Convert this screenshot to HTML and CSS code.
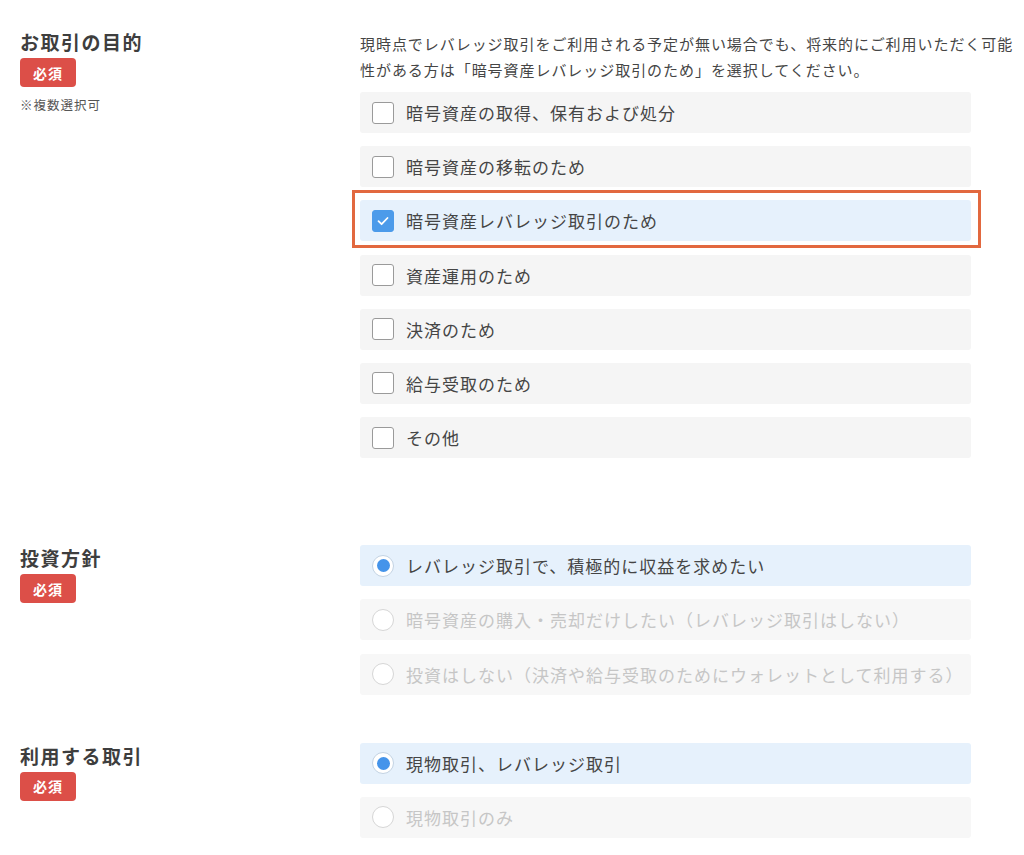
FILE: index.html
```html
<!DOCTYPE html>
<html lang="ja">
<head>
<meta charset="utf-8">
<title>お取引の目的</title>
<link rel="stylesheet" href="styles.css">
</head>
<body>
<div class="page">
  <section class="field field--purpose">
    <div class="field-label">
      <h2 class="field-title">お取引の目的</h2>
      <span class="badge">必須</span>
      <p class="note">※複数選択可</p>
    </div>
    <div class="field-body">
      <p class="desc">現時点でレバレッジ取引をご利用される予定が無い場合でも、将来的にご利用いただく可能性がある方は「暗号資産レバレッジ取引のため」を選択してください。</p>
      <ul class="options">
        <li class="option"><span class="check"></span><span class="option-text">暗号資産の取得、保有および処分</span></li>
        <li class="option"><span class="check"></span><span class="option-text">暗号資産の移転のため</span></li>
        <li class="option option--selected option--marked"><span class="check check--on"><svg viewBox="0 0 20 20" width="20" height="20"><path d="M5.5 10.2 L8.6 13.2 L14.5 7" fill="none" stroke="#fff" stroke-width="1.8" stroke-linecap="round" stroke-linejoin="round"/></svg></span><span class="option-text">暗号資産レバレッジ取引のため</span></li>
        <li class="option"><span class="check"></span><span class="option-text">資産運用のため</span></li>
        <li class="option"><span class="check"></span><span class="option-text">決済のため</span></li>
        <li class="option"><span class="check"></span><span class="option-text">給与受取のため</span></li>
        <li class="option"><span class="check"></span><span class="option-text">その他</span></li>
      </ul>
    </div>
  </section>

  <section class="field field--policy">
    <div class="field-label">
      <h2 class="field-title">投資方針</h2>
      <span class="badge">必須</span>
    </div>
    <div class="field-body">
      <ul class="options">
        <li class="option option--selected"><span class="radio radio--on"></span><span class="option-text">レバレッジ取引で、積極的に収益を求めたい</span></li>
        <li class="option option--disabled"><span class="radio"></span><span class="option-text">暗号資産の購入・売却だけしたい（レバレッジ取引はしない）</span></li>
        <li class="option option--disabled"><span class="radio"></span><span class="option-text">投資はしない（決済や給与受取のためにウォレットとして利用する）</span></li>
      </ul>
    </div>
  </section>

  <section class="field field--trade">
    <div class="field-label">
      <h2 class="field-title">利用する取引</h2>
      <span class="badge">必須</span>
    </div>
    <div class="field-body">
      <ul class="options">
        <li class="option option--selected"><span class="radio radio--on"></span><span class="option-text">現物取引、レバレッジ取引</span></li>
        <li class="option option--disabled"><span class="radio"></span><span class="option-text">現物取引のみ</span></li>
      </ul>
    </div>
  </section>
</div>
</body>
</html>
```

FILE: styles.css
```css
* { box-sizing: border-box; }

html, body {
  margin: 0;
  padding: 0;
  background: #ffffff;
}

body {
  font-family: "Noto Sans CJK JP", "Noto Sans", sans-serif;
  color: #444444;
  width: 1024px;
  height: 855px;
  overflow: hidden;
}

.page {
  padding: 29px 0 0 20px;
}

.field {
  display: grid;
  grid-template-columns: 340px 1fr;
}

.field--policy { margin-top: 87px; }
.field--trade { margin-top: 48px; }

.field-label {
  display: flex;
  flex-direction: column;
  align-items: flex-start;
}

.field-title {
  margin: 0;
  font-size: 19px;
  line-height: 26px;
  font-weight: 700;
  color: #3e3e3e;
  letter-spacing: 1.5px;
}

.badge {
  margin-top: 3px;
  width: 56px;
  height: 29px;
  border-radius: 4px;
  background: #dc4f48;
  color: #ffffff;
  font-size: 14px;
  font-weight: 700;
  display: flex;
  align-items: center;
  justify-content: center;
  letter-spacing: 1px;
}

.note {
  margin: 10px 0 0;
  font-size: 12.5px;
  line-height: 16px;
  color: #555555;
  letter-spacing: 1px;
}

.field-body {
  display: flex;
  flex-direction: column;
}

.desc {
  margin: 2px 0 0;
  width: 656px;
  font-size: 15px;
  line-height: 26px;
  letter-spacing: 0.95px;
  color: #454545;
}

.field--purpose .options { margin-top: 9px; }

.options {
  list-style: none;
  margin: 0;
  padding: 0;
  width: 611px;
  display: flex;
  flex-direction: column;
  gap: 13.2px;
}

.option {
  position: relative;
  height: 41px;
  border-radius: 3px;
  background: #f5f5f5;
  display: flex;
  align-items: center;
  padding-left: 12px;
  gap: 12px;
}

.option--selected { background: #e6f1fc; }

.option--disabled { background: #f7f7f7; }

.option--marked::after {
  content: "";
  position: absolute;
  top: -10px;
  bottom: -7px;
  left: -8px;
  right: -10px;
  border: 3px solid #e2683f;
  pointer-events: none;
}

.option-text {
  font-size: 17px;
  letter-spacing: 1px;
  color: #454545;
  line-height: 1;
}

.option--disabled .option-text { color: #c6c6c6; }

.check {
  width: 22px;
  height: 22px;
  border: 1.5px solid #9a9a9a;
  border-radius: 3px;
  background: #ffffff;
  flex: none;
  display: flex;
  align-items: center;
  justify-content: center;
}

.check--on {
  background: #4c9bea;
  border-color: #4c9bea;
}

.radio {
  width: 22px;
  height: 22px;
  border-radius: 50%;
  border: 1.5px solid #d6d6d6;
  background: #ffffff;
  flex: none;
  position: relative;
}

.radio--on {
  border-color: #c3d3e3;
}

.radio--on::after {
  content: "";
  position: absolute;
  left: 50%;
  top: 50%;
  width: 13px;
  height: 13px;
  margin: -6.5px 0 0 -6.5px;
  border-radius: 50%;
  background: #4594ea;
}
```
